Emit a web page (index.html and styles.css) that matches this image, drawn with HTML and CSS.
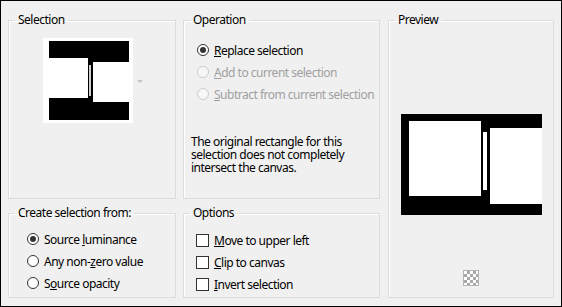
FILE: index.html
```html
<!DOCTYPE html>
<html lang="en">
<head>
    <meta charset="UTF-8">
    <title>Promote Selection</title>
    <link rel="stylesheet" href="styles.css">
</head>
<body>
    <div class="window">
        <fieldset class="group selection">
            <legend>Selection</legend>
            <div class="thumb-row">
                <div class="thumb">
                    <svg width="80" height="79" viewBox="0 0 80 79">
                        <rect x="0" y="0" width="80" height="79" fill="#000"/>
                        <rect x="0" y="17" width="39" height="40" fill="#fff"/>
                        <rect x="44" y="21" width="36" height="40" fill="#fff"/>
                        <rect x="40" y="24" width="2" height="31" fill="#d0d0d0"/>
                    </svg>
                </div>
                <span class="drop-arrow"></span>
            </div>
        </fieldset>

        <fieldset class="group operation">
            <legend>Operation</legend>
            <div class="choices">
                <label class="choice"><span class="radio checked"></span><span><u>R</u>eplace selection</span></label>
                <label class="choice disabled"><span class="radio"></span><span><u>A</u>dd to current selection</span></label>
                <label class="choice disabled"><span class="radio"></span><span><u>S</u>ubtract from current selection</span></label>
            </div>
            <p class="message">The original rectangle for this selection does not completely intersect the canvas.</p>
        </fieldset>

        <fieldset class="group preview">
            <legend>Preview</legend>
            <div class="preview-image">
                <svg width="141" height="101" viewBox="0 0 141 101">
                    <rect x="0" y="0" width="141" height="101" fill="#000"/>
                    <rect x="8" y="7" width="72" height="75" fill="#fff"/>
                    <rect x="82" y="18" width="4" height="58" fill="#fff"/>
                    <rect x="89" y="14" width="52" height="76" fill="#fff"/>
                </svg>
            </div>
            <span class="checker"></span>
        </fieldset>

        <fieldset class="group source">
            <legend>Create selection from:</legend>
            <div class="choices">
                <label class="choice"><span class="radio checked"></span><span>Source <u>l</u>uminance</span></label>
                <label class="choice"><span class="radio"></span><span>Any non-<u>z</u>ero value</span></label>
                <label class="choice"><span class="radio"></span><span>S<u>o</u>urce opacity</span></label>
            </div>
        </fieldset>

        <fieldset class="group options">
            <legend>Options</legend>
            <div class="choices">
                <label class="choice"><span class="box"></span><span><u>M</u>ove to upper left</span></label>
                <label class="choice"><span class="box"></span><span><u>C</u>lip to canvas</span></label>
                <label class="choice"><span class="box"></span><span><u>I</u>nvert selection</span></label>
            </div>
        </fieldset>
    </div>
</body>
</html>
```

FILE: styles.css
```css
body {
    margin: 0;
    padding: 0;
    background-color: #f0f0f0;
    font-family: "Segoe UI", "Noto Sans", sans-serif;
    font-size: 12px;
    letter-spacing: -0.5px;
    color: #000;
}
.window {
    box-sizing: border-box;
    width: 562px;
    height: 307px;
    border: 1px solid #000;
    background-color: #f0f0f0;
    padding: 11px 0 0 7px;
    display: grid;
    grid-template-columns: 168px 197px 167px;
    grid-template-rows: 187px 93px;
    column-gap: 7px;
    row-gap: 6px;
}
.group {
    margin: 0;
    padding: 0;
    min-width: 0;
    border: 1px solid #dcdcdc;
    box-shadow: inset 1px 1px 0 #fff;
}
.group legend {
    margin-left: 6px;
    padding: 0 3px;
    line-height: 16px;
}
.preview {
    grid-column: 3;
    grid-row: 1 / span 2;
    margin-left: 1px;
    display: flex;
    flex-direction: column;
    align-items: flex-start;
}
.source {
    grid-column: 1;
    grid-row: 2;
}
.options {
    grid-column: 2;
    grid-row: 2;
}

/* selection thumbnail */
.thumb-row {
    display: flex;
    align-items: center;
    margin: 10px 0 0 34px;
}
.thumb {
    background-color: #fff;
    width: 90px;
    height: 85px;
    padding: 3px 0 0 6px;
    box-sizing: border-box;
}
.thumb svg {
    display: block;
}
.drop-arrow {
    margin-left: 4px;
    margin-top: 1px;
    width: 0;
    height: 0;
    border-left: 3px solid transparent;
    border-right: 3px solid transparent;
    border-top: 3px solid #c4c4c4;
}

/* radios and checkboxes */
.choices {
    display: flex;
    flex-direction: column;
}
.choice {
    display: flex;
    align-items: center;
    height: 22px;
    gap: 5px;
    white-space: nowrap;
}
.choice.disabled {
    color: #a0a0a0;
}
.radio {
    box-sizing: border-box;
    width: 12px;
    height: 12px;
    border: 1px solid #333;
    border-radius: 50%;
    background-color: #fff;
    display: flex;
    align-items: center;
    justify-content: center;
}
.radio.checked::after {
    content: "";
    width: 6px;
    height: 6px;
    border-radius: 50%;
    background-color: #333;
}
.choice.disabled .radio {
    border-color: #cccccc;
    background-color: #f7f7f7;
}
.box {
    box-sizing: border-box;
    width: 13px;
    height: 13px;
    border: 1px solid #333;
    background-color: #fff;
}
.operation .choices {
    margin: 11px 0 0 13px;
}
.message {
    margin: 30px 0 0 7px;
    line-height: 13px;
    width: 170px;
}
.source .choices {
    margin: 7px 0 0 18px;
}
.options .choices {
    margin: 8px 0 0 12px;
}

/* preview */
.preview-image {
    margin: 86px 0 0 12px;
}
.preview-image svg {
    display: block;
}
.checker {
    margin: 55px 0 0 74px;
    width: 16px;
    height: 16px;
    box-sizing: border-box;
    border: 1px solid #b4b4b4;
    background-color: #fff;
    background-image:
        linear-gradient(45deg, #a8a8a8 25%, transparent 25%, transparent 75%, #a8a8a8 75%),
        linear-gradient(45deg, #a8a8a8 25%, transparent 25%, transparent 75%, #a8a8a8 75%);
    background-size: 6px 6px;
    background-position: 0 0, 3px 3px;
}
```
